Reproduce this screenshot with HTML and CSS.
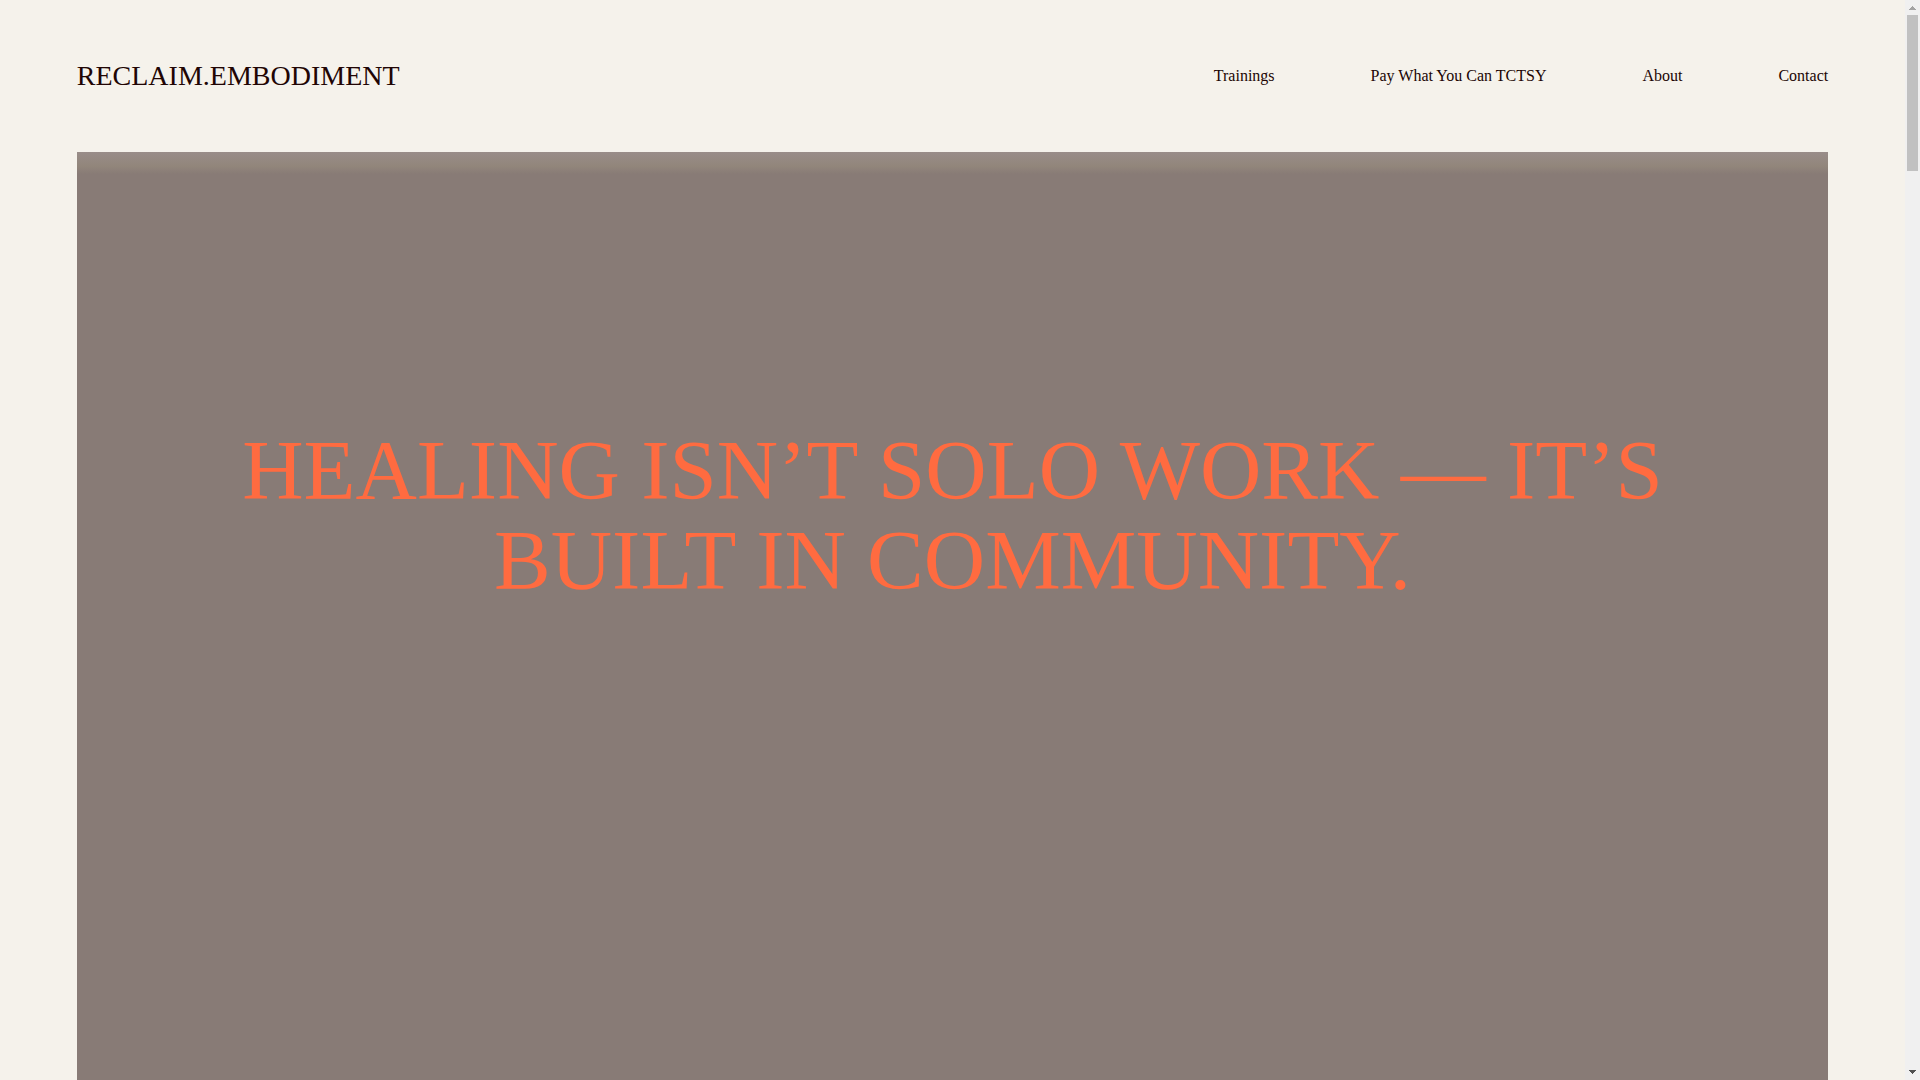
FILE: index.html
```html
<!DOCTYPE html>
<html lang="en">
<head>
    <meta charset="UTF-8">
    <meta name="viewport" content="width=device-width, initial-scale=1.0">
    <title>RECLAIM.EMBODIMENT</title>
    <link rel="stylesheet" href="styles.css">
</head>
<body>
    <div class="page">
        <header class="header">
            <a href="#" class="site-title">RECLAIM.EMBODIMENT</a>
            <nav class="nav">
                <a href="#">Trainings</a>
                <a href="#">Pay What You Can TCTSY</a>
                <a href="#">About</a>
                <a href="#">Contact</a>
            </nav>
        </header>
        <main class="hero">
            <h1>HEALING ISN’T SOLO WORK — IT’S BUILT IN COMMUNITY.</h1>
        </main>
    </div>

    <div class="scrollbar" aria-hidden="true">
        <svg class="arrow" viewBox="0 0 15 15"><path d="M4 10V9H5V8H6V7H7V6H8V7H9V8H10V9H11V10Z" fill="#a3a3a3"/></svg>
        <div class="thumb"></div>
        <svg class="arrow arrow-down" viewBox="0 0 15 15"><path d="M4 5V6H5V7H6V8H7V9H8V8H9V7H10V6H11V5Z" fill="#505050"/></svg>
    </div>
</body>
</html>
```

FILE: styles.css
```css
* {
    box-sizing: border-box;
}

body {
    display: flex;
    height: 100vh;
    margin: 0;
    overflow: hidden;
    background-color: #f5f2eb;
    color: #210504;
    font-family: "Liberation Serif", "Times New Roman", serif;
}

.page {
    flex: 1;
    display: flex;
    flex-direction: column;
    padding: 0 4vw;
}

.header {
    display: flex;
    justify-content: space-between;
    align-items: center;
    height: 152px;
}

.header a {
    color: inherit;
    text-decoration: none;
}

.site-title {
    font-size: 28px;
    line-height: 32px;
}

.nav {
    display: flex;
    gap: 96px;
    font-size: 16px;
    line-height: 24px;
}

.hero {
    flex: 1;
    padding: 273px 120px 0;
    background: linear-gradient(#998d89, #92867b 14px, #887b76 22px);
}

h1 {
    margin: 0;
    color: #ff6b40;
    font-size: 85px;
    font-weight: normal;
    line-height: 90px;
    text-align: center;
}

.scrollbar {
    display: flex;
    flex-direction: column;
    width: 15px;
    background-color: #f0f0f0;
}

.arrow {
    width: 15px;
    height: 15px;
}

.arrow-down {
    margin-top: auto;
}

.thumb {
    height: 156px;
    margin: 0 2px;
    background-color: #c1c1c1;
}
```
